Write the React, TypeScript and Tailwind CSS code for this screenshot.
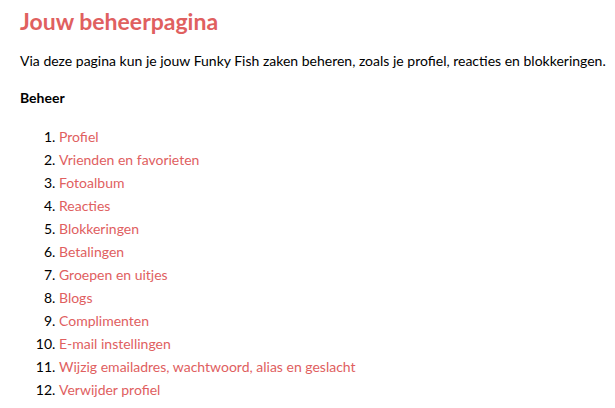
const items = [
  "Profiel",
  "Vrienden en favorieten",
  "Fotoalbum",
  "Reacties",
  "Blokkeringen",
  "Betalingen",
  "Groepen en uitjes",
  "Blogs",
  "Complimenten",
  "E-mail instellingen",
  "Wijzig emailadres, wachtwoord, alias en geslacht",
  "Verwijder profiel",
];

export default function App() {
  return (
    <div className="min-h-screen bg-white pl-[20px] pr-[4px] pt-[6px] font-['Lato',sans-serif] text-black">
      <h1 className="text-[23px] font-bold leading-[30px] text-[#e0605f]">Jouw beheerpagina</h1>
      <p className="mt-[15px] whitespace-nowrap text-[14px] leading-[20px]">
        Via deze pagina kun je jouw Funky Fish zaken beheren, zoals je profiel, reacties en blokkeringen.
      </p>
      <h2 className="mt-[17px] text-[14px] font-bold leading-[20px]">Beheer</h2>
      <ol className="mt-[17px] list-decimal pl-[39px] text-[14px] leading-[23px] marker:text-black">
        {items.map((item) => (
          <li key={item}>
            <a href="#" className="text-[#e0605f]">
              {item}
            </a>
          </li>
        ))}
      </ol>
    </div>
  );
}
